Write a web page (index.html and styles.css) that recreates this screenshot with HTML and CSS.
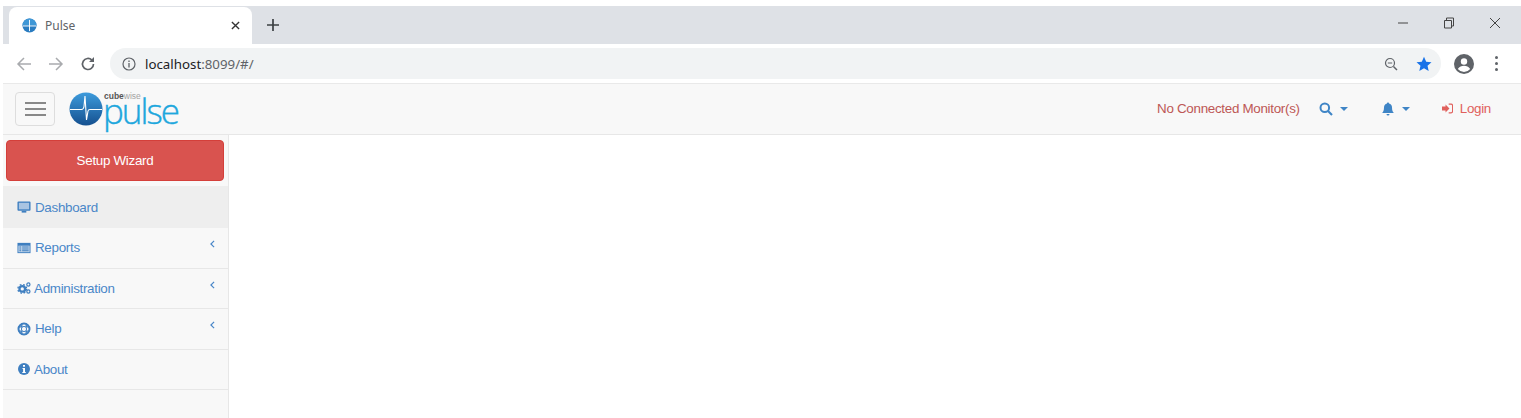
FILE: index.html
```html
<!DOCTYPE html>
<html lang="en">
<head>
    <meta charset="UTF-8">
    <title>Pulse</title>
    <link rel="stylesheet" href="styles.css">
</head>
<body>
    <div class="tabstrip">
        <div class="tab">
            <svg class="favicon" viewBox="0 0 16 16"><circle cx="8" cy="8" r="7.5" fill="#2a7cc0"/><path d="M8 .5a7.5 7.5 0 0 0-7.500 7.500h15A7.500 7.500 0 0 0 8 .5z" fill="#3f97d6"/><path d="M1 8.500h14M8 2v12" fill="none" stroke="#fff" stroke-width="1"/></svg>
            <span class="tab-title">Pulse</span>
            <svg class="tab-close" viewBox="0 0 10 10"><path d="M1 1l8 8M9 1l-8 8" stroke="#333" stroke-width="1.5"/></svg>
        </div>
        <svg class="new-tab" viewBox="0 0 12 12"><path d="M6 0v12M0 6h12" stroke="#3c4043" stroke-width="1.7"/></svg>
        <div class="window-btns">
            <svg viewBox="0 0 12 12"><path d="M1 6h10" stroke="#444" stroke-width="1"/></svg>
            <svg viewBox="0 0 12 12"><path d="M3.5 3V1h7v8H8.500M1.500 3.500h7v7.500h-7z" fill="none" stroke="#444" stroke-width="1"/></svg>
            <svg viewBox="0 0 12 12"><path d="M1 1l10 10M11 1L1 11" stroke="#444" stroke-width="1"/></svg>
        </div>
    </div>

    <div class="toolbar">
        <svg class="nav-arrow" viewBox="0 0 16 16"><path d="M15 8H2M8 2L2 8l6 6" fill="none" stroke="#a9abae" stroke-width="1.5"/></svg>
        <svg class="nav-arrow" viewBox="0 0 16 16"><path d="M1 8h13M8 2l6 6-6 6" fill="none" stroke="#a9abae" stroke-width="1.5"/></svg>
        <svg class="nav-arrow" viewBox="0 0 16 16"><path d="M13.5 8a5.500 5.500 0 1 1-1.600-3.900" fill="none" stroke="#5f6368" stroke-width="1.7"/><path d="M14 1v5H9z" fill="#5f6368"/></svg>
        <div class="omnibox">
            <svg class="info" viewBox="0 0 14 14"><circle cx="7" cy="7" r="6" fill="none" stroke="#5f6368" stroke-width="1.2"/><path d="M7 6v4.500M7 3.500v1.400" stroke="#5f6368" stroke-width="1.3"/></svg>
            <span class="url">localhost<span class="url-rest">:8099/#/</span></span>
            <svg class="zoom-out" viewBox="0 0 14 14"><circle cx="6" cy="6" r="4.500" fill="none" stroke="#5f6368" stroke-width="1.2"/><path d="M9.500 9.500L13 13" stroke="#5f6368" stroke-width="1.5"/><path d="M3.800 6h4.400" stroke="#5f6368" stroke-width="1"/></svg>
            <svg class="star" viewBox="0 0 16 16"><path d="M8 .8l2.200 4.900 5.300.5-4 3.600 1.200 5.300L8 12.300l-4.700 2.800 1.200-5.300-4-3.600 5.300-.5z" fill="#1a73e8"/></svg>
        </div>
        <svg class="avatar" viewBox="0 0 20 20"><circle cx="10" cy="10" r="10" fill="#5f6368"/><circle cx="10" cy="7.500" r="3.200" fill="#fff"/><path d="M3.800 15c1.500-2.300 3.800-3.200 6.200-3.200s4.700.9 6.200 3.200a8 8 0 0 1-12.400 0z" fill="#fff"/></svg>
        <div class="menu-dots"><i></i><i></i><i></i></div>
    </div>

    <nav class="navbar">
        <button class="toggle"><i></i><i></i><i></i></button>
        <div class="logo">
            <svg class="logo-ball" viewBox="0 0 34 34">
                <defs><linearGradient id="ball" x1="0" y1="0" x2="0" y2="1"><stop offset="0" stop-color="#3d9bdc"/><stop offset="1" stop-color="#15508f"/></linearGradient></defs>
                <circle cx="17" cy="17" r="16.5" fill="url(#ball)"/>
                <path d="M1 17.500h11.500q2 0 2.500-3L16 4l1.500 24 1.500-9q.3-1.500 2-1.500h12" fill="none" stroke="#fff" stroke-width="1.1"/>
            </svg>
            <div class="logo-text">
                <span class="logo-top"><b>cube</b>wise</span>
                <span class="logo-name">pulse</span>
            </div>
        </div>
        <div class="nav-right">
            <span class="no-monitor">No Connected Monitor(s)</span>
            <span class="nav-item">
                <svg class="nav-icon" viewBox="0 0 14 14"><circle cx="5.800" cy="5.800" r="4.300" fill="none" stroke="#3f85c6" stroke-width="2"/><path d="M9 9l4 4" stroke="#3f85c6" stroke-width="2.2"/></svg>
                <i class="caret"></i>
            </span>
            <span class="nav-item">
                <svg class="nav-icon" viewBox="0 0 14 14"><path d="M7 .5c.6 0 1 .4 1 1 2 .4 3 2 3 4 0 3 .8 4.500 2 5.500H1c1.200-1 2-2.500 2-5.500 0-2 1-3.600 3-4 0-.6.400-1 1-1zM5.500 12h3a1.500 1.500 0 0 1-3 0z" fill="#3f85c6"/></svg>
                <i class="caret"></i>
            </span>
            <span class="login">
                <svg class="login-icon" viewBox="0 0 14 14"><path d="M0 4.500h4.500V2l5 5-5 5V9.500H0z" fill="#e0605c"/><path d="M8.500 1.500h3a2 2 0 0 1 2 2v7a2 2 0 0 1-2 2h-3" fill="none" stroke="#e0605c" stroke-width="1.5"/></svg>
                Login
            </span>
        </div>
    </nav>

    <div class="main">
        <aside class="sidebar">
            <div class="wizard-wrap"><button class="wizard">Setup Wizard</button></div>
            <ul class="menu">
                <li class="active">
                    <svg class="menu-icon" viewBox="0 0 15 14"><path d="M1.500 1h12a1 1 0 0 1 1 1v8a1 1 0 0 1-1 1h-12a1 1 0 0 1-1-1V2a1 1 0 0 1 1-1z" fill="#3f7fc0"/><path d="M2 2.500h11v7H2z" fill="#a9c4e2"/><path d="M5 11h5v2H5z" fill="#3f7fc0"/></svg>
                    <span>Dashboard</span>
                </li>
                <li>
                    <svg class="menu-icon" viewBox="0 0 15 14"><path d="M.5 1.500h14v11H.5z" fill="#3f7fc0"/><path d="M1.500 4.500h12v7h-12z" fill="#c3d6ea"/><path d="M2.500 5.500h2v1h-2zM5.500 5.500h7v1h-7zM2.500 7.500h2v1h-2zM5.500 7.500h7v1h-7zM2.500 9.500h2v1h-2zM5.500 9.500h7v1h-7z" fill="#3f7fc0"/></svg>
                    <span>Reports</span>
                    <svg class="chev" viewBox="0 0 6 10"><path d="M5 1L1 5l4 4" fill="none" stroke="#4a87c8" stroke-width="1.5"/></svg>
                </li>
                <li>
                    <svg class="menu-icon narrow" viewBox="0 0 16 14"><circle cx="6" cy="8" r="3.200" fill="none" stroke="#3f7fc0" stroke-width="2.6"/><circle cx="6" cy="8" r="5" fill="none" stroke="#3f7fc0" stroke-width="1.5" stroke-dasharray="2 2"/><circle cx="13" cy="3" r="1.800" fill="none" stroke="#3f7fc0" stroke-width="1.4"/><circle cx="13" cy="11" r="1.800" fill="none" stroke="#3f7fc0" stroke-width="1.4"/></svg>
                    <span>Administration</span>
                    <svg class="chev" viewBox="0 0 6 10"><path d="M5 1L1 5l4 4" fill="none" stroke="#4a87c8" stroke-width="1.5"/></svg>
                </li>
                <li>
                    <svg class="menu-icon" viewBox="0 0 14 14"><circle cx="7" cy="7" r="5.500" fill="none" stroke="#3f7fc0" stroke-width="2"/><circle cx="7" cy="7" r="2.600" fill="none" stroke="#3f7fc0" stroke-width="1"/><path d="M4.800 1.500v3.500M9.200 1.500v3.500M4.800 9v3.500M9.200 9v3.500M1.500 4.800H5M9 4.800h3.500M1.500 9.200H5M9 9.200h3.500" stroke="#3f7fc0" stroke-width="1.3"/></svg>
                    <span>Help</span>
                    <svg class="chev" viewBox="0 0 6 10"><path d="M5 1L1 5l4 4" fill="none" stroke="#4a87c8" stroke-width="1.5"/></svg>
                </li>
                <li>
                    <svg class="menu-icon narrow" viewBox="0 0 14 14"><circle cx="7" cy="7" r="6" fill="#3f7fc0"/><path d="M6 3h2v1.800H6zM5.500 6h2.500v4h.8v1H5.300v-1h.8V7h-.6z" fill="#fff"/></svg>
                    <span>About</span>
                </li>
            </ul>
        </aside>
        <div class="content"></div>
    </div>
</body>
</html>
```

FILE: styles.css
```css
* {
    box-sizing: border-box;
}
html, body {
    height: 100%;
}
body {
    margin: 0;
    padding: 6px 0 0 3px;
    height: 418px;
    overflow: hidden;
    background-color: #fff;
    font-family: "Liberation Sans", Arial, sans-serif;
    font-size: 13.4px;
    letter-spacing: -0.3px;
    color: #333;
    display: flex;
    flex-direction: column;
}

/* browser chrome */
.tabstrip {
    height: 38px;
    background-color: #dee1e6;
    display: flex;
    align-items: flex-end;
    padding-left: 6px;
    flex-shrink: 0;
}
.tab {
    width: 243px;
    height: 37px;
    background-color: #fff;
    border-radius: 8px 8px 0 0;
    display: flex;
    align-items: center;
    padding: 0 12px 0 13px;
}
.favicon {
    width: 15px;
    height: 15px;
}
.tab-title {
    margin-left: 8px;
    font-family: "Noto Sans", sans-serif;
    font-size: 12px;
    letter-spacing: 0;
    color: #5f6368;
    flex: 1;
}
.tab-close {
    width: 9px;
    height: 9px;
}
.new-tab {
    width: 12px;
    height: 12px;
    margin: 0 0 13px 15px;
}
.window-btns {
    margin-left: auto;
    align-self: flex-start;
    display: flex;
    gap: 34px;
    padding: 11px 20px 0 0;
}
.window-btns svg {
    width: 12px;
    height: 12px;
}
.toolbar {
    height: 39px;
    display: flex;
    align-items: center;
    padding-left: 13px;
    flex-shrink: 0;
}
.nav-arrow {
    width: 16px;
    height: 16px;
    margin-right: 16px;
}
.omnibox {
    margin-left: -2px;
    width: 1331px;
    height: 31px;
    background-color: #f1f3f4;
    border-radius: 16px;
    display: flex;
    align-items: center;
    padding: 0 9px 0 12px;
}
.info {
    width: 14px;
    height: 14px;
}
.url {
    margin-left: 9px;
    font-family: "Noto Sans", sans-serif;
    font-size: 13.3px;
    letter-spacing: 0;
    color: #202124;
    flex: 1;
}
.url-rest {
    color: #5f6368;
}
.zoom-out {
    width: 14px;
    height: 14px;
    margin-right: 18px;
}
.star {
    width: 16px;
    height: 16px;
}
.avatar {
    width: 20px;
    height: 20px;
    margin-left: 13px;
}
.menu-dots {
    margin-left: 21px;
    display: flex;
    flex-direction: column;
    gap: 3px;
}
.menu-dots i {
    display: block;
    width: 3px;
    height: 3px;
    border-radius: 50%;
    background-color: #5f6368;
}

/* app header */
.navbar {
    height: 52px;
    background-color: #f8f8f8;
    border-top: 1px solid #e9e9e9;
    border-bottom: 1px solid #e7e7e7;
    display: flex;
    align-items: center;
    padding: 0 0 1px 12px;
    flex-shrink: 0;
}
.toggle {
    width: 40px;
    height: 34px;
    padding: 0;
    background: transparent;
    border: 1px solid #ddd;
    border-radius: 4px;
    display: flex;
    flex-direction: column;
    align-items: center;
    justify-content: center;
    gap: 4px;
}
.toggle i {
    display: block;
    width: 21px;
    height: 2px;
    background-color: #888;
}
.logo {
    display: flex;
    align-items: center;
    margin-left: 14px;
}
.logo-ball {
    width: 34px;
    height: 34px;
}
.logo-text {
    align-self: flex-start;
    display: flex;
    flex-direction: column;
}
.logo-top {
    font-size: 8.5px;
    letter-spacing: 0;
    line-height: 9px;
    color: #a4a4a4;
    margin-left: 1px;
}
.logo-top b {
    color: #555;
}
.logo-name {
    font-family: "Open Sans", sans-serif;
    font-size: 35px;
    font-weight: 300;
    line-height: 26px;
    letter-spacing: -2px;
    -webkit-text-stroke: 0.4px #1ea7dd;
    color: #1ea7dd;
    margin-top: -3px;
}
.nav-right {
    margin-left: auto;
    display: flex;
    align-items: center;
    padding-right: 30px;
}
.no-monitor {
    color: #bd5755;
}
.nav-item {
    display: flex;
    align-items: center;
    gap: 7px;
    margin-left: 19px;
}
.nav-item + .nav-item {
    margin-left: 33px;
}
.nav-icon {
    width: 14px;
    height: 14px;
}
.caret {
    width: 0;
    height: 0;
    border-left: 4.5px solid transparent;
    border-right: 4.5px solid transparent;
    border-top: 4.5px solid #3f85c6;
}
.login {
    display: flex;
    align-items: center;
    gap: 7px;
    margin-left: 32px;
    color: #e0605c;
}
.login-icon {
    width: 11px;
    height: 11px;
}

/* sidebar */
.main {
    flex: 1;
    display: flex;
    min-height: 0;
}
.sidebar {
    width: 226px;
    background-color: #f8f8f8;
    border-right: 1px solid #e7e7e7;
}
.wizard-wrap {
    padding: 5px 4px 5px 3px;
}
.wizard {
    display: block;
    width: 100%;
    height: 41px;
    background-color: #d9534f;
    border: 1px solid #d43f3a;
    border-radius: 4px;
    color: #fff;
    font-family: inherit;
    font-size: 13.4px;
    letter-spacing: -0.3px;
}
.menu {
    list-style: none;
    margin: 0;
    padding: 0;
}
.menu li {
    height: 40.5px;
    border-bottom: 1px solid #e7e7e7;
    display: flex;
    align-items: center;
    padding: 0 13px 0 14px;
    color: #4a87c8;
}
.menu li.active {
    height: 42px;
    background-color: #eee;
    border-bottom: 0;
}
.menu-icon {
    width: 14px;
    height: 14px;
    margin-right: 4px;
}
.menu-icon.narrow {
    margin-right: 3px;
}
.chev {
    width: 5px;
    height: 8px;
    margin: -7px 0 0 auto;
}
.content {
    flex: 1;
    background-color: #fff;
}
```
